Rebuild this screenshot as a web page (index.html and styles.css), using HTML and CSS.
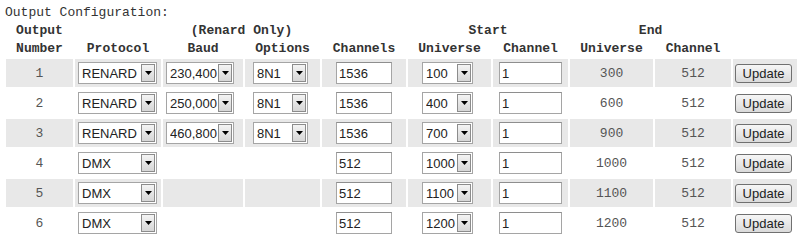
FILE: index.html
```html
<!DOCTYPE html>
<html lang="en">
<head>
    <meta charset="UTF-8">
    <title>Output Configuration</title>
    <link rel="stylesheet" href="styles.css">
</head>
<body>
    <!-- Output table title -->
    <div class="title">Output Configuration:</div>

    <table class="outputs">
        <colgroup>
            <col class="c-num"><col class="c-proto"><col class="c-baud"><col class="c-opt"><col class="c-chans">
            <col class="c-suni"><col class="c-schan"><col class="c-euni"><col class="c-echan"><col class="c-btn">
        </colgroup>
        <thead>
            <tr>
                <th>Output</th><th></th><th colspan="2">(Renard Only)</th><th></th>
                <th colspan="2">Start</th><th colspan="2">End</th><th></th>
            </tr>
            <tr>
                <th>Number</th><th>Protocol</th><th>Baud</th><th>Options</th><th>Channels</th>
                <th>Universe</th><th>Channel</th><th>Universe</th><th>Channel</th><th></th>
            </tr>
        </thead>
        <tbody>
            <tr class="shade">
                <td class="num">1</td>
                <td><span class="dropdown proto"><select><option>RENARD</option><option>DMX</option></select><span class="arrow"><svg width="7" height="4" viewBox="0 0 7 4"><path d="M0 0h7L3.5 4z"/></svg></span></span></td>
                <td><span class="dropdown baud"><select><option>230,400</option></select><span class="arrow"><svg width="7" height="4" viewBox="0 0 7 4"><path d="M0 0h7L3.5 4z"/></svg></span></span></td>
                <td><span class="dropdown opts"><select><option>8N1</option></select><span class="arrow"><svg width="7" height="4" viewBox="0 0 7 4"><path d="M0 0h7L3.5 4z"/></svg></span></span></td>
                <td><input type="text" class="chans" value="1536"></td>
                <td><span class="dropdown uni"><select><option>100</option></select><span class="arrow"><svg width="7" height="4" viewBox="0 0 7 4"><path d="M0 0h7L3.5 4z"/></svg></span></span></td>
                <td><input type="text" class="start" value="1"></td>
                <td class="num">300</td>
                <td class="num">512</td>
                <td><button class="update">Update</button></td>
            </tr>
            <tr>
                <td class="num">2</td>
                <td><span class="dropdown proto"><select><option>RENARD</option><option>DMX</option></select><span class="arrow"><svg width="7" height="4" viewBox="0 0 7 4"><path d="M0 0h7L3.5 4z"/></svg></span></span></td>
                <td><span class="dropdown baud"><select><option>250,000</option></select><span class="arrow"><svg width="7" height="4" viewBox="0 0 7 4"><path d="M0 0h7L3.5 4z"/></svg></span></span></td>
                <td><span class="dropdown opts"><select><option>8N1</option></select><span class="arrow"><svg width="7" height="4" viewBox="0 0 7 4"><path d="M0 0h7L3.5 4z"/></svg></span></span></td>
                <td><input type="text" class="chans" value="1536"></td>
                <td><span class="dropdown uni"><select><option>400</option></select><span class="arrow"><svg width="7" height="4" viewBox="0 0 7 4"><path d="M0 0h7L3.5 4z"/></svg></span></span></td>
                <td><input type="text" class="start" value="1"></td>
                <td class="num">600</td>
                <td class="num">512</td>
                <td><button class="update">Update</button></td>
            </tr>
            <tr class="shade">
                <td class="num">3</td>
                <td><span class="dropdown proto"><select><option>RENARD</option><option>DMX</option></select><span class="arrow"><svg width="7" height="4" viewBox="0 0 7 4"><path d="M0 0h7L3.5 4z"/></svg></span></span></td>
                <td><span class="dropdown baud"><select><option>460,800</option></select><span class="arrow"><svg width="7" height="4" viewBox="0 0 7 4"><path d="M0 0h7L3.5 4z"/></svg></span></span></td>
                <td><span class="dropdown opts"><select><option>8N1</option></select><span class="arrow"><svg width="7" height="4" viewBox="0 0 7 4"><path d="M0 0h7L3.5 4z"/></svg></span></span></td>
                <td><input type="text" class="chans" value="1536"></td>
                <td><span class="dropdown uni"><select><option>700</option></select><span class="arrow"><svg width="7" height="4" viewBox="0 0 7 4"><path d="M0 0h7L3.5 4z"/></svg></span></span></td>
                <td><input type="text" class="start" value="1"></td>
                <td class="num">900</td>
                <td class="num">512</td>
                <td><button class="update">Update</button></td>
            </tr>
            <tr>
                <td class="num">4</td>
                <td><span class="dropdown proto"><select><option>DMX</option><option>RENARD</option></select><span class="arrow"><svg width="7" height="4" viewBox="0 0 7 4"><path d="M0 0h7L3.5 4z"/></svg></span></span></td>
                <td></td>
                <td></td>
                <td><input type="text" class="chans" value="512"></td>
                <td><span class="dropdown uni"><select><option>1000</option></select><span class="arrow"><svg width="7" height="4" viewBox="0 0 7 4"><path d="M0 0h7L3.5 4z"/></svg></span></span></td>
                <td><input type="text" class="start" value="1"></td>
                <td class="num">1000</td>
                <td class="num">512</td>
                <td><button class="update">Update</button></td>
            </tr>
            <tr class="shade">
                <td class="num">5</td>
                <td><span class="dropdown proto"><select><option>DMX</option><option>RENARD</option></select><span class="arrow"><svg width="7" height="4" viewBox="0 0 7 4"><path d="M0 0h7L3.5 4z"/></svg></span></span></td>
                <td></td>
                <td></td>
                <td><input type="text" class="chans" value="512"></td>
                <td><span class="dropdown uni"><select><option>1100</option></select><span class="arrow"><svg width="7" height="4" viewBox="0 0 7 4"><path d="M0 0h7L3.5 4z"/></svg></span></span></td>
                <td><input type="text" class="start" value="1"></td>
                <td class="num">1100</td>
                <td class="num">512</td>
                <td><button class="update">Update</button></td>
            </tr>
            <tr>
                <td class="num">6</td>
                <td><span class="dropdown proto"><select><option>DMX</option><option>RENARD</option></select><span class="arrow"><svg width="7" height="4" viewBox="0 0 7 4"><path d="M0 0h7L3.5 4z"/></svg></span></span></td>
                <td></td>
                <td></td>
                <td><input type="text" class="chans" value="512"></td>
                <td><span class="dropdown uni"><select><option>1200</option></select><span class="arrow"><svg width="7" height="4" viewBox="0 0 7 4"><path d="M0 0h7L3.5 4z"/></svg></span></span></td>
                <td><input type="text" class="start" value="1"></td>
                <td class="num">1200</td>
                <td class="num">512</td>
                <td><button class="update">Update</button></td>
            </tr>
        </tbody>
    </table>
</body>
</html>
```

FILE: styles.css
```css
/* Global */
body {
    margin: 0;
    background-color: #fff;
    color: #333;
    font-family: "Liberation Mono", "Courier New", monospace;
    font-size: 13px;
}

.title {
    padding: 5px 5px 0 5px;
    line-height: 16px;
}

/* Output table */
.outputs {
    margin-left: 4px;
    width: 795px;
    table-layout: fixed;
    border-collapse: separate;
    border-spacing: 2px;
}

.c-num { width: 67px; }
.c-proto { width: 86px; }
.c-baud { width: 80px; }
.c-opt { width: 75px; }
.c-chans { width: 84px; }
.c-suni { width: 83px; }
.c-schan { width: 75px; }
.c-euni { width: 83px; }
.c-echan { width: 76px; }
.c-btn { width: 64px; }

.outputs th {
    padding: 0;
    line-height: 16px;
    height: 16px;
    font-weight: bold;
    text-align: center;
    color: #333;
}

.outputs td {
    padding: 0;
    height: 28px;
    text-align: left;
    vertical-align: middle;
}

.outputs tr.shade td {
    background-color: #e8e8e8;
}

.outputs td.num {
    text-align: center;
    color: #555;
}

/* Drop down boxes */
.dropdown {
    display: inline-flex;
    vertical-align: middle;
    box-sizing: border-box;
    height: 22px;
    border: 1px solid #a5a5a5;
    background-color: #fff;
}

.dropdown select {
    flex: 1;
    min-width: 0;
    -webkit-appearance: none;
    appearance: none;
    border: none;
    outline: none;
    background: transparent;
    margin: 0;
    padding: 0 0 0 3px;
    font-family: "Liberation Sans", Arial, sans-serif;
    font-size: 13px;
    color: #222;
}

.dropdown .arrow {
    display: flex;
    align-items: center;
    justify-content: center;
    box-sizing: border-box;
    flex: none;
    width: 14px;
    margin: 1px;
    border: 1px solid #8c8c8c;
    background: linear-gradient(#f4f4f4, #d6d6d6);
}

.dropdown .arrow svg {
    fill: #000;
}

.dropdown.proto { width: 79px; margin-left: 3px; }
.dropdown.baud { width: 68px; margin-left: 3px; }
.dropdown.opts { width: 55px; margin-left: 8px; }
.dropdown.uni { width: 51px; margin-left: 14px; }

/* Text boxes */
input[type="text"] {
    box-sizing: border-box;
    height: 22px;
    vertical-align: middle;
    border: 1px solid #a5a5a5;
    border-top-color: #8e8e8e;
    padding: 0 2px;
    font-family: "Liberation Sans", Arial, sans-serif;
    font-size: 13px;
    color: #222;
}

input.chans { width: 56px; margin: 0 0 0 14px; }
input.start { width: 63px; margin: 0 0 0 6px; }

/* Update button */
.update {
    box-sizing: border-box;
    width: 57px;
    height: 19px;
    margin-left: 2px;
    padding: 0;
    vertical-align: middle;
    border: 1px solid #707070;
    border-radius: 3px;
    background: linear-gradient(#f6f6f6, #dadada);
    font-family: "Liberation Sans", Arial, sans-serif;
    font-size: 13px;
    color: #222;
    cursor: pointer;
}
```
